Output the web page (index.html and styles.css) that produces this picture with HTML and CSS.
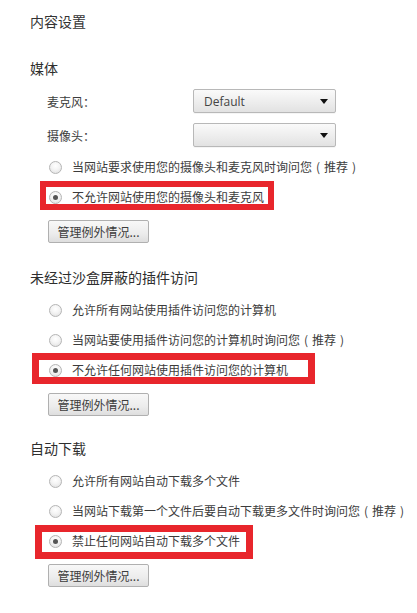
FILE: index.html
```html
<!DOCTYPE html>
<html lang="zh-CN">
<head>
<meta charset="utf-8">
<title>内容设置</title>
<link rel="stylesheet" href="styles.css">
</head>
<body>
<div class="page">
  <h1 class="title">内容设置</h1>

  <section class="section">
    <h2 class="heading first">媒体</h2>
    <div class="fields">
      <div class="field">
        <span class="field-label">麦克风：</span>
        <div class="select"><span class="select-value">Default</span><span class="arrow"></span></div>
      </div>
      <div class="field">
        <span class="field-label">摄像头：</span>
        <div class="select"><span class="select-value"></span><span class="arrow"></span></div>
      </div>
    </div>
    <div class="options tight">
      <div class="option"><span class="radio"></span><span class="option-text">当网站要求使用您的摄像头和麦克风时询问您<span class="paren">(</span>推荐<span class="paren">)</span></span></div>
      <div class="option marked mark-a"><span class="radio checked"></span><span class="option-text">不允许网站使用您的摄像头和麦克风</span></div>
    </div>
    <button class="btn">管理例外情况...</button>
  </section>

  <section class="section">
    <h2 class="heading">未经过沙盒屏蔽的插件访问</h2>
    <div class="options">
      <div class="option"><span class="radio"></span><span class="option-text">允许所有网站使用插件访问您的计算机</span></div>
      <div class="option"><span class="radio"></span><span class="option-text">当网站要使用插件访问您的计算机时询问您<span class="paren">(</span>推荐<span class="paren">)</span></span></div>
      <div class="option marked mark-b"><span class="radio checked"></span><span class="option-text">不允许任何网站使用插件访问您的计算机</span></div>
    </div>
    <button class="btn">管理例外情况...</button>
  </section>

  <section class="section">
    <h2 class="heading last">自动下载</h2>
    <div class="options">
      <div class="option"><span class="radio"></span><span class="option-text">允许所有网站自动下载多个文件</span></div>
      <div class="option"><span class="radio"></span><span class="option-text">当网站下载第一个文件后要自动下载更多文件时询问您<span class="paren">(</span>推荐<span class="paren">)</span></span></div>
      <div class="option marked mark-c"><span class="radio checked"></span><span class="option-text">禁止任何网站自动下载多个文件</span></div>
    </div>
    <button class="btn">管理例外情况...</button>
  </section>
</div>
</body>
</html>
```

FILE: styles.css
```css
html, body {
  margin: 0;
  padding: 0;
  background: #ffffff;
}

body {
  font-family: "Noto Sans CJK SC", "Noto Sans", sans-serif;
  color: #3c3c3c;
  font-size: 12px;
}

.page {
  padding: 11px 0 0 30px;
}

.title {
  margin: 0;
  font-size: 14px;
  line-height: 20px;
  font-weight: normal;
  color: #333;
}

.heading {
  margin: 24px 0 0 0;
  font-size: 14px;
  line-height: 20px;
  font-weight: normal;
  color: #2e2e2e;
}

.heading.first {
  margin-top: 27px;
}

.heading.last {
  margin-top: 22px;
}

.fields {
  margin-top: 11px;
  padding-left: 17px;
  display: flex;
  flex-direction: column;
  gap: 10px;
}

.field {
  display: flex;
  align-items: center;
  height: 24px;
}

.field-label {
  width: 146px;
  font-size: 12px;
  color: #3c3c3c;
}

.select {
  width: 143px;
  height: 24px;
  box-sizing: border-box;
  border: 1px solid #b8b8b8;
  border-radius: 2px;
  background: linear-gradient(#fafafa, #ececec 60%, #e2e2e2);
  display: flex;
  align-items: center;
  justify-content: space-between;
  padding: 0 7px 0 10px;
  box-shadow: 0 1px 0 rgba(0,0,0,0.04);
}

.select-value {
  font-family: "Open Sans", "Noto Sans", sans-serif;
  font-size: 12px;
  color: #444;
}

.arrow {
  width: 0;
  height: 0;
  border-left: 4.5px solid transparent;
  border-right: 4.5px solid transparent;
  border-top: 5px solid #111;
}

.options {
  margin-top: 8px;
  padding-left: 19px;
  display: flex;
  flex-direction: column;
  align-items: flex-start;
}

.options.tight {
  margin-top: 5px;
}

.option {
  display: inline-flex;
  align-items: center;
  height: 30px;
  gap: 10px;
  position: relative;
}

.option-text {
  font-size: 12px;
  line-height: 16px;
  color: #3c3c3c;
  white-space: nowrap;
  position: relative;
  z-index: 1;
}

.paren {
  padding: 0 4px;
}

.radio {
  width: 13px;
  height: 13px;
  box-sizing: border-box;
  border-radius: 50%;
  border: 1px solid #b5b5b5;
  background: radial-gradient(circle at 50% 35%, #ffffff 0%, #f4f4f4 45%, #dcdcdc 100%);
  display: flex;
  align-items: center;
  justify-content: center;
  flex: none;
  position: relative;
  z-index: 1;
}

.radio.checked::before {
  content: "";
  width: 5px;
  height: 5px;
  border-radius: 50%;
  background: #555;
}

.marked::after {
  content: "";
  position: absolute;
  border: 6px solid #e8262c;
  pointer-events: none;
}

.mark-a::after {
  top: -1px;
  bottom: 2px;
  left: -9px;
  right: -10px;
}

.mark-b::after {
  top: -2px;
  bottom: 1px;
  left: -17px;
  right: -27px;
  border-width: 7px;
}

.mark-c::after {
  top: -1px;
  bottom: -3px;
  left: -14px;
  right: -13px;
  border-width: 7px;
}

.btn {
  display: block;
  margin: 8px 0 0 18px;
  width: 101px;
  height: 23px;
  box-sizing: border-box;
  padding: 0;
  border: 1px solid #b0b0b0;
  border-radius: 2px;
  background: linear-gradient(#f8f8f8, #ececec 60%, #dedede);
  font-family: "Noto Sans CJK SC", "Noto Sans", sans-serif;
  font-size: 12px;
  line-height: 20px;
  color: #3c3c3c;
  text-align: center;
}
```
